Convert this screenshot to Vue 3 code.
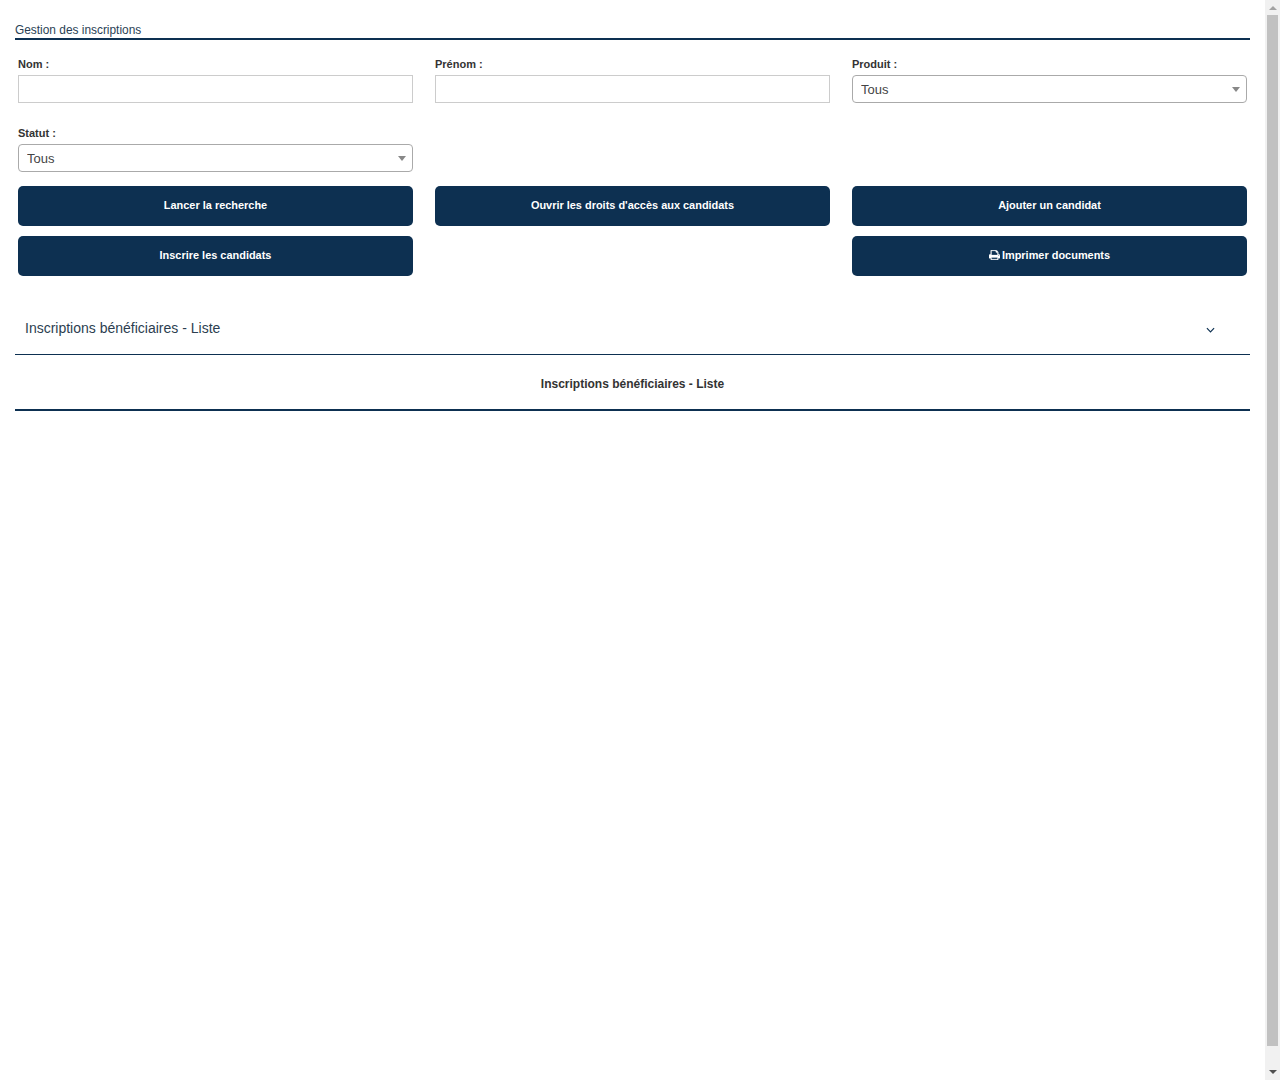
<script setup>
const title = 'Inscriptions bénéficiaires - Liste'
</script>

<template>
  <div class="shell">
    <main class="page">
      <h1 class="page-title">Gestion des inscriptions</h1>

      <form class="form" @submit.prevent>
        <div class="fields">
          <div class="field">
            <label for="nom">Nom :</label>
            <input id="nom" type="text" />
          </div>
          <div class="field">
            <label for="prenom">Prénom :</label>
            <input id="prenom" type="text" />
          </div>
          <div class="field">
            <label for="produit">Produit :</label>
            <div class="select-wrap">
              <select id="produit"><option>Tous</option></select>
            </div>
          </div>
          <div class="field">
            <label for="statut">Statut :</label>
            <div class="select-wrap">
              <select id="statut"><option>Tous</option></select>
            </div>
          </div>
        </div>

        <div class="actions">
          <button type="button">Lancer la recherche</button>
          <button type="button">Ouvrir les droits d'accès aux candidats</button>
          <button type="button">Ajouter un candidat</button>
          <button type="button">Inscrire les candidats</button>
          <button type="button" class="third">
            <svg class="print" viewBox="64 128 1664 1536" preserveAspectRatio="none" aria-hidden="true">
              <path fill="currentColor" stroke="currentColor" stroke-width="40" d="M448 1536h896v-256h-896v256zm0-640h896v-384h-160q-40 0-68-28t-28-68v-160h-640v640zm1152 64q0-26-19-45t-45-19-45 19-19 45 19 45 45 19 45-19 19-45zm128 0v416q0 13-9.5 22.5t-22.5 9.5h-224v160q0 40-28 68t-68 28h-960q-40 0-68-28t-28-68v-160h-224q-13 0-22.5-9.5t-9.5-22.5v-416q0-79 56.5-135.5t135.5-56.5h64v-544q0-40 28-68t68-28h672q40 0 88 20t76 48l152 152q28 28 48 76t20 88v256h64q79 0 135.5 56.5t56.5 135.5z" />
            </svg>Imprimer documents
          </button>
        </div>
      </form>

      <div class="accordion">
        <span>{{ title }}</span>
        <svg class="chevron" viewBox="0 0 10 6" aria-hidden="true">
          <path d="M1 1l4 4 4-4" fill="none" stroke="currentColor" stroke-width="1.3" />
        </svg>
      </div>

      <h2 class="list-title">{{ title }}</h2>
    </main>

    <div class="scrollbar" aria-hidden="true">
      <span class="arrow arrow-up"></span>
      <span class="thumb"></span>
      <span class="arrow arrow-down"></span>
    </div>
  </div>
</template>

<style>
html {
  overflow: hidden;
}
body {
  margin: 0;
  background: #fff;
}
</style>

<style scoped>
.shell {
  display: flex;
  height: 1080px;
  overflow: hidden;
}
.page {
  flex: 1;
  min-width: 0;
  box-sizing: border-box;
  padding: 22px 15px 0;
  font-family: "Liberation Sans", Arial, sans-serif;
  color: #333;
}
.scrollbar {
  flex: 0 0 15px;
  display: flex;
  flex-direction: column;
  align-items: center;
  background: #f1f1f1;
}
.thumb {
  width: 11px;
  height: 1031px;
  flex: none;
  background: #c1c1c1;
}
.arrow {
  flex: none;
  width: 0;
  height: 0;
  border-style: solid;
  border-left: 4px solid transparent;
  border-right: 4px solid transparent;
}
.arrow-up {
  margin: 6px 0 5px;
  border-top: 0;
  border-bottom: 4px solid #a3a3a3;
}
.arrow-down {
  margin-top: 24px;
  border-bottom: 0;
  border-top: 4px solid #505050;
}
.page-title {
  margin: 0;
  border-bottom: 2px solid #0d3051;
  font-size: 11.9px;
  font-weight: 400;
  line-height: 16px;
  color: #2a3f55;
}
.form {
  padding: 17px 3px 0;
}
.fields {
  display: grid;
  grid-template-columns: repeat(3, 395px);
  column-gap: 22px;
  row-gap: 23px;
}
.field {
  display: flex;
  flex-direction: column;
}
label {
  margin-bottom: 4px;
  font-size: 11px;
  font-weight: 700;
  line-height: 14px;
  color: #333;
}
input,
select {
  box-sizing: border-box;
  width: 100%;
  height: 28px;
  margin: 0;
  background: #fff;
  font-family: inherit;
}
input {
  border: 1px solid #ccc;
  border-radius: 0;
}
select {
  display: block;
  padding: 0 20px 0 8px;
  border: 1px solid #aaa;
  border-radius: 4px;
  appearance: none;
  font-size: 13px;
  color: #444;
}
.select-wrap {
  position: relative;
}
.select-wrap::after {
  content: "";
  position: absolute;
  top: 12px;
  right: 7px;
  border-style: solid;
  border-width: 5px 4px 0;
  border-color: #888 transparent transparent;
  pointer-events: none;
}
.actions {
  display: grid;
  grid-template-columns: repeat(3, 395px);
  column-gap: 22px;
  row-gap: 10px;
  margin-top: 14px;
}
button {
  height: 40px;
  padding: 0 0 2px;
  border: 0;
  border-radius: 5px;
  background: #0d3051;
  color: #fff;
  font-family: inherit;
  font-size: 10.95px;
  font-weight: 700;
}
.third {
  grid-column: 3;
}
.print {
  width: 11px;
  height: 10px;
  margin-right: 2px;
  vertical-align: -1px;
}
.accordion {
  display: flex;
  align-items: center;
  justify-content: space-between;
  height: 49px;
  box-sizing: border-box;
  margin-top: 30px;
  padding: 0 35px 4px 10px;
  border-bottom: 1px solid #0d3051;
  font-size: 14px;
  line-height: 16px;
  color: #2c3e50;
}
.chevron {
  width: 9px;
  height: 6px;
  margin-top: 3px;
  color: #0d3051;
}
.list-title {
  margin: 0;
  padding: 21px 0 17px;
  border-bottom: 2px solid #0d3051;
  font-size: 12px;
  font-weight: 700;
  line-height: 16px;
  text-align: center;
  color: #333;
}
</style>
